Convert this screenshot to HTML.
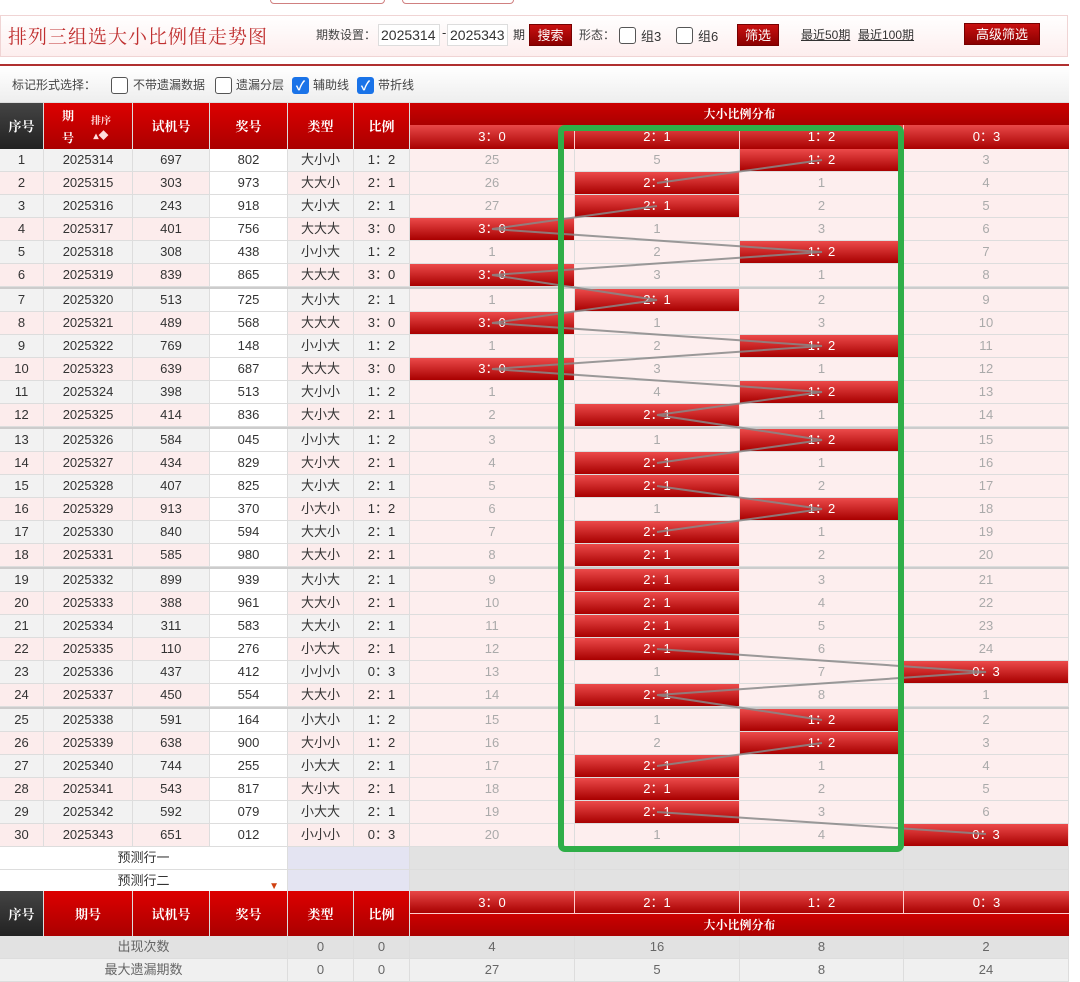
<!DOCTYPE html>
<html><head><meta charset="utf-8"><style>
*{box-sizing:border-box;margin:0;padding:0}
body{width:1080px;height:970px;overflow:hidden;background:#fff;font-family:"Liberation Sans","Noto Sans CJK SC",sans-serif;font-size:13px;color:#333;position:relative}
.a{position:absolute}
.btn{position:absolute;background:linear-gradient(#c81010,#8a0000);color:#fff;font-size:13px;text-align:center;line-height:22px;height:22px;border:1px solid #700}
.cb{position:absolute;width:17px;height:17px;border:1.5px solid #555;border-radius:3px;background:#fff}
.cbc{position:absolute;width:17px;height:17px;border-radius:3px;background:#1a73e8;color:#fff;font-size:13px;line-height:17px;text-align:center;font-weight:bold}
.inp{position:absolute;height:22px;background:#fff;border:1px solid #ddd;font-size:14px;line-height:20px;padding-left:2px}
#tb{position:absolute;left:0;top:103px;width:1069px}
.r{display:flex;height:23px;border-bottom:1px solid #ddd}
.r.s{height:25px;border-top:2px solid #ccc}
.r>div{border-right:1px solid #ddd;text-align:center;line-height:22px;font-size:13px;height:100%}
.w1{width:44px}.w2{width:89px}.w3{width:77px}.w4{width:78px}.w5{width:66px}.w6{width:56px}.m{width:165px}.m4{width:164px}
.o>div{background:#f2f2f2}.e>div{background:#fcecec}
.r>div.wh{background:#fff}
.r>div.p{background:#fdeeee;color:#aaa}
.r>div.x{background:linear-gradient(#ec4a4a,#a80000);color:#fff;border-right:1px solid #fdd}
.h{color:#fff;font-weight:bold;font-family:"Noto Serif CJK SC",serif;text-align:center}
</style></head><body>
<div class="a" style="left:270px;top:-10px;width:115px;height:14px;border:1px solid #d08080;border-radius:4px"></div>
<div class="a" style="left:402px;top:-10px;width:112px;height:14px;border:1px solid #d08080;border-radius:4px"></div>
<div class="a" style="left:0;top:15px;width:1068px;height:42px;border:1px solid #f0d4d4;background:linear-gradient(#fff,#fdeeee)"></div>
<div class="a" style="left:8px;top:22px;font-size:19px;color:#c03030;font-family:'Noto Serif CJK SC',serif;letter-spacing:1px">排列三组选大小比例值走势图</div>
<div class="a" style="left:316px;top:26px;font-size:12px;color:#444">期数设置：</div>
<div class="inp" style="left:378px;top:24px;width:62px">2025314</div>
<div class="a" style="left:442px;top:25px">-</div>
<div class="inp" style="left:447px;top:24px;width:61px">2025343</div>
<div class="a" style="left:513px;top:26px;font-size:12px">期</div>
<div class="btn" style="left:529px;top:24px;width:43px">搜索</div>
<div class="a" style="left:579px;top:26px;font-size:12px;color:#444">形态：</div>
<div class="cb" style="left:619px;top:27px"></div><div class="a" style="left:641px;top:26px">组3</div>
<div class="cb" style="left:676px;top:27px"></div><div class="a" style="left:698px;top:26px">组6</div>
<div class="btn" style="left:737px;top:24px;width:42px">筛选</div>
<div class="a" style="left:801px;top:26px;text-decoration:underline;font-size:12px">最近50期</div>
<div class="a" style="left:858px;top:26px;text-decoration:underline;font-size:12px">最近100期</div>
<div class="btn" style="left:964px;top:23px;width:76px">高级筛选</div>
<div class="a" style="left:0;top:64px;width:1069px;height:2px;background:#b03030"></div>
<div class="a" style="left:0;top:67px;width:1069px;height:36px;background:linear-gradient(#fff,#eee);border-bottom:1px solid #ddd"></div>
<div class="a" style="left:12px;top:76px;font-size:12px;color:#444">标记形式选择：</div>
<div class="cb" style="left:111px;top:77px"></div><div class="a" style="left:133px;top:76px;font-size:12px;color:#444">不带遗漏数据</div>
<div class="cb" style="left:215px;top:77px"></div><div class="a" style="left:236px;top:76px;font-size:12px;color:#444">遗漏分层</div>
<div class="cbc" style="left:292px;top:77px">✓</div><div class="a" style="left:313px;top:76px;font-size:12px;color:#444">辅助线</div>
<div class="cbc" style="left:357px;top:77px">✓</div><div class="a" style="left:378px;top:76px;font-size:12px;color:#444">带折线</div>

<div class="a h" style="left:0;top:103px;width:44px;height:46px;line-height:46px;background:linear-gradient(#444,#222);border-right:1px solid #ddd">序号</div>
<div class="a h" style="left:44px;top:103px;width:89px;height:46px;background:linear-gradient(#d00,#a00);border-right:1px solid #ddd;font-size:12px"><div style="position:absolute;left:18px;top:4px">期</div><div style="position:absolute;left:18px;top:26px">号</div><div style="position:absolute;left:47px;top:9px;font-size:10px;color:#fdd">排序<br>▴◆</div></div>
<div class="a h" style="left:133px;top:103px;width:77px;height:46px;line-height:46px;background:linear-gradient(#d00,#a00);border-right:1px solid #ddd">试机号</div>
<div class="a h" style="left:210px;top:103px;width:78px;height:46px;line-height:46px;background:linear-gradient(#d00,#a00);border-right:1px solid #ddd">奖号</div>
<div class="a h" style="left:288px;top:103px;width:66px;height:46px;line-height:46px;background:linear-gradient(#d00,#a00);border-right:1px solid #ddd">类型</div>
<div class="a h" style="left:354px;top:103px;width:56px;height:46px;line-height:46px;background:linear-gradient(#d00,#a00);border-right:1px solid #ddd">比例</div>
<div class="a h" style="left:410px;top:103px;width:659px;height:22px;line-height:22px;background:linear-gradient(#c00,#a00);font-size:12px">大小比例分布</div>
<div class="a" style="left:410px;top:125px;width:659px;height:24px;display:flex;color:#fff;font-size:13px;line-height:24px;text-align:center">
<div style="width:165px;background:linear-gradient(#e84848,#a80000);border-right:1px solid #fcc">3：0</div><div style="width:165px;background:linear-gradient(#e84848,#a80000);border-right:1px solid #fcc">2：1</div><div style="width:164px;background:linear-gradient(#e84848,#a80000);border-right:1px solid #fcc">1：2</div><div style="width:165px;background:linear-gradient(#e84848,#a80000)">0：3</div></div>

<div id="tb" style="top:149px">
<div class="r o"><div class="w1">1</div><div class="w2">2025314</div><div class="w3">697</div><div class="w4 wh">802</div><div class="w5">大小小</div><div class="w6">1：2</div><div class="m p">25</div><div class="m p">5</div><div class="m4 x">1：2</div><div class="m p">3</div></div>
<div class="r e"><div class="w1">2</div><div class="w2">2025315</div><div class="w3">303</div><div class="w4 wh">973</div><div class="w5">大大小</div><div class="w6">2：1</div><div class="m p">26</div><div class="m x">2：1</div><div class="m4 p">1</div><div class="m p">4</div></div>
<div class="r o"><div class="w1">3</div><div class="w2">2025316</div><div class="w3">243</div><div class="w4 wh">918</div><div class="w5">大小大</div><div class="w6">2：1</div><div class="m p">27</div><div class="m x">2：1</div><div class="m4 p">2</div><div class="m p">5</div></div>
<div class="r e"><div class="w1">4</div><div class="w2">2025317</div><div class="w3">401</div><div class="w4 wh">756</div><div class="w5">大大大</div><div class="w6">3：0</div><div class="m x">3：0</div><div class="m p">1</div><div class="m4 p">3</div><div class="m p">6</div></div>
<div class="r o"><div class="w1">5</div><div class="w2">2025318</div><div class="w3">308</div><div class="w4 wh">438</div><div class="w5">小小大</div><div class="w6">1：2</div><div class="m p">1</div><div class="m p">2</div><div class="m4 x">1：2</div><div class="m p">7</div></div>
<div class="r e"><div class="w1">6</div><div class="w2">2025319</div><div class="w3">839</div><div class="w4 wh">865</div><div class="w5">大大大</div><div class="w6">3：0</div><div class="m x">3：0</div><div class="m p">3</div><div class="m4 p">1</div><div class="m p">8</div></div>
<div class="r o s"><div class="w1">7</div><div class="w2">2025320</div><div class="w3">513</div><div class="w4 wh">725</div><div class="w5">大小大</div><div class="w6">2：1</div><div class="m p">1</div><div class="m x">2：1</div><div class="m4 p">2</div><div class="m p">9</div></div>
<div class="r e"><div class="w1">8</div><div class="w2">2025321</div><div class="w3">489</div><div class="w4 wh">568</div><div class="w5">大大大</div><div class="w6">3：0</div><div class="m x">3：0</div><div class="m p">1</div><div class="m4 p">3</div><div class="m p">10</div></div>
<div class="r o"><div class="w1">9</div><div class="w2">2025322</div><div class="w3">769</div><div class="w4 wh">148</div><div class="w5">小小大</div><div class="w6">1：2</div><div class="m p">1</div><div class="m p">2</div><div class="m4 x">1：2</div><div class="m p">11</div></div>
<div class="r e"><div class="w1">10</div><div class="w2">2025323</div><div class="w3">639</div><div class="w4 wh">687</div><div class="w5">大大大</div><div class="w6">3：0</div><div class="m x">3：0</div><div class="m p">3</div><div class="m4 p">1</div><div class="m p">12</div></div>
<div class="r o"><div class="w1">11</div><div class="w2">2025324</div><div class="w3">398</div><div class="w4 wh">513</div><div class="w5">大小小</div><div class="w6">1：2</div><div class="m p">1</div><div class="m p">4</div><div class="m4 x">1：2</div><div class="m p">13</div></div>
<div class="r e"><div class="w1">12</div><div class="w2">2025325</div><div class="w3">414</div><div class="w4 wh">836</div><div class="w5">大小大</div><div class="w6">2：1</div><div class="m p">2</div><div class="m x">2：1</div><div class="m4 p">1</div><div class="m p">14</div></div>
<div class="r o s"><div class="w1">13</div><div class="w2">2025326</div><div class="w3">584</div><div class="w4 wh">045</div><div class="w5">小小大</div><div class="w6">1：2</div><div class="m p">3</div><div class="m p">1</div><div class="m4 x">1：2</div><div class="m p">15</div></div>
<div class="r e"><div class="w1">14</div><div class="w2">2025327</div><div class="w3">434</div><div class="w4 wh">829</div><div class="w5">大小大</div><div class="w6">2：1</div><div class="m p">4</div><div class="m x">2：1</div><div class="m4 p">1</div><div class="m p">16</div></div>
<div class="r o"><div class="w1">15</div><div class="w2">2025328</div><div class="w3">407</div><div class="w4 wh">825</div><div class="w5">大小大</div><div class="w6">2：1</div><div class="m p">5</div><div class="m x">2：1</div><div class="m4 p">2</div><div class="m p">17</div></div>
<div class="r e"><div class="w1">16</div><div class="w2">2025329</div><div class="w3">913</div><div class="w4 wh">370</div><div class="w5">小大小</div><div class="w6">1：2</div><div class="m p">6</div><div class="m p">1</div><div class="m4 x">1：2</div><div class="m p">18</div></div>
<div class="r o"><div class="w1">17</div><div class="w2">2025330</div><div class="w3">840</div><div class="w4 wh">594</div><div class="w5">大大小</div><div class="w6">2：1</div><div class="m p">7</div><div class="m x">2：1</div><div class="m4 p">1</div><div class="m p">19</div></div>
<div class="r e"><div class="w1">18</div><div class="w2">2025331</div><div class="w3">585</div><div class="w4 wh">980</div><div class="w5">大大小</div><div class="w6">2：1</div><div class="m p">8</div><div class="m x">2：1</div><div class="m4 p">2</div><div class="m p">20</div></div>
<div class="r o s"><div class="w1">19</div><div class="w2">2025332</div><div class="w3">899</div><div class="w4 wh">939</div><div class="w5">大小大</div><div class="w6">2：1</div><div class="m p">9</div><div class="m x">2：1</div><div class="m4 p">3</div><div class="m p">21</div></div>
<div class="r e"><div class="w1">20</div><div class="w2">2025333</div><div class="w3">388</div><div class="w4 wh">961</div><div class="w5">大大小</div><div class="w6">2：1</div><div class="m p">10</div><div class="m x">2：1</div><div class="m4 p">4</div><div class="m p">22</div></div>
<div class="r o"><div class="w1">21</div><div class="w2">2025334</div><div class="w3">311</div><div class="w4 wh">583</div><div class="w5">大大小</div><div class="w6">2：1</div><div class="m p">11</div><div class="m x">2：1</div><div class="m4 p">5</div><div class="m p">23</div></div>
<div class="r e"><div class="w1">22</div><div class="w2">2025335</div><div class="w3">110</div><div class="w4 wh">276</div><div class="w5">小大大</div><div class="w6">2：1</div><div class="m p">12</div><div class="m x">2：1</div><div class="m4 p">6</div><div class="m p">24</div></div>
<div class="r o"><div class="w1">23</div><div class="w2">2025336</div><div class="w3">437</div><div class="w4 wh">412</div><div class="w5">小小小</div><div class="w6">0：3</div><div class="m p">13</div><div class="m p">1</div><div class="m4 p">7</div><div class="m x">0：3</div></div>
<div class="r e"><div class="w1">24</div><div class="w2">2025337</div><div class="w3">450</div><div class="w4 wh">554</div><div class="w5">大大小</div><div class="w6">2：1</div><div class="m p">14</div><div class="m x">2：1</div><div class="m4 p">8</div><div class="m p">1</div></div>
<div class="r o s"><div class="w1">25</div><div class="w2">2025338</div><div class="w3">591</div><div class="w4 wh">164</div><div class="w5">小大小</div><div class="w6">1：2</div><div class="m p">15</div><div class="m p">1</div><div class="m4 x">1：2</div><div class="m p">2</div></div>
<div class="r e"><div class="w1">26</div><div class="w2">2025339</div><div class="w3">638</div><div class="w4 wh">900</div><div class="w5">大小小</div><div class="w6">1：2</div><div class="m p">16</div><div class="m p">2</div><div class="m4 x">1：2</div><div class="m p">3</div></div>
<div class="r o"><div class="w1">27</div><div class="w2">2025340</div><div class="w3">744</div><div class="w4 wh">255</div><div class="w5">小大大</div><div class="w6">2：1</div><div class="m p">17</div><div class="m x">2：1</div><div class="m4 p">1</div><div class="m p">4</div></div>
<div class="r e"><div class="w1">28</div><div class="w2">2025341</div><div class="w3">543</div><div class="w4 wh">817</div><div class="w5">大小大</div><div class="w6">2：1</div><div class="m p">18</div><div class="m x">2：1</div><div class="m4 p">2</div><div class="m p">5</div></div>
<div class="r o"><div class="w1">29</div><div class="w2">2025342</div><div class="w3">592</div><div class="w4 wh">079</div><div class="w5">小大大</div><div class="w6">2：1</div><div class="m p">19</div><div class="m x">2：1</div><div class="m4 p">3</div><div class="m p">6</div></div>
<div class="r e"><div class="w1">30</div><div class="w2">2025343</div><div class="w3">651</div><div class="w4 wh">012</div><div class="w5">小小小</div><div class="w6">0：3</div><div class="m p">20</div><div class="m p">1</div><div class="m4 p">4</div><div class="m x">0：3</div></div>
<div class="r"><div style="width:288px;background:#fff">预测行一</div><div style="width:122px;background:#e4e4f2"></div><div class="m" style="background:#e2e2e2"></div><div class="m" style="background:#e2e2e2"></div><div class="m4" style="background:#e2e2e2"></div><div class="m" style="background:#e2e2e2"></div></div>
<div class="r"><div style="width:288px;background:#fff;position:relative">预测行二<span style="position:absolute;right:8px;top:6px;color:#d04010;font-size:10px">▼</span></div><div style="width:122px;background:#e4e4f2"></div><div class="m" style="background:#e2e2e2"></div><div class="m" style="background:#e2e2e2"></div><div class="m4" style="background:#e2e2e2"></div><div class="m" style="background:#e2e2e2"></div></div>
</div>

<div class="a h" style="left:0;top:891px;width:44px;height:45px;line-height:45px;background:linear-gradient(#444,#222);border-right:1px solid #ddd">序号</div>
<div class="a h" style="left:44px;top:891px;width:89px;height:45px;line-height:45px;background:linear-gradient(#d00,#a00);border-right:1px solid #ddd">期号</div>
<div class="a h" style="left:133px;top:891px;width:77px;height:45px;line-height:45px;background:linear-gradient(#d00,#a00);border-right:1px solid #ddd">试机号</div>
<div class="a h" style="left:210px;top:891px;width:78px;height:45px;line-height:45px;background:linear-gradient(#d00,#a00);border-right:1px solid #ddd">奖号</div>
<div class="a h" style="left:288px;top:891px;width:66px;height:45px;line-height:45px;background:linear-gradient(#d00,#a00);border-right:1px solid #ddd">类型</div>
<div class="a h" style="left:354px;top:891px;width:56px;height:45px;line-height:45px;background:linear-gradient(#d00,#a00);border-right:1px solid #ddd">比例</div>
<div class="a" style="left:410px;top:891px;width:659px;height:23px;display:flex;color:#fff;font-size:13px;line-height:23px;text-align:center;border-bottom:1px solid #fcc">
<div style="width:165px;background:linear-gradient(#e84848,#a80000);border-right:1px solid #fcc">3：0</div><div style="width:165px;background:linear-gradient(#e84848,#a80000);border-right:1px solid #fcc">2：1</div><div style="width:164px;background:linear-gradient(#e84848,#a80000);border-right:1px solid #fcc">1：2</div><div style="width:165px;background:linear-gradient(#e84848,#a80000)">0：3</div></div>
<div class="a h" style="left:410px;top:914px;width:659px;height:22px;line-height:22px;background:linear-gradient(#c00,#a00);font-size:12px">大小比例分布</div>
<div class="a" style="left:0;top:936px;width:1069px">
<div class="r" style="background:#e2e2e2;color:#666"><div style="width:288px">出现次数</div><div class="w5">0</div><div class="w6">0</div><div class="m">4</div><div class="m">16</div><div class="m4">8</div><div class="m">2</div></div>
<div class="r" style="background:#f0f0f0;color:#666"><div style="width:288px">最大遗漏期数</div><div class="w5">0</div><div class="w6">0</div><div class="m">27</div><div class="m">5</div><div class="m4">8</div><div class="m">24</div></div>
</div>

<svg class="a" style="left:0;top:0" width="1080" height="970">
<path fill="none" stroke="#888" stroke-opacity="0.85" stroke-width="2" d="M822,160 L657,183 M657,206 L492,229 L822,252 L492,275 L657,300 L492,323 L822,346 L492,369 L822,392 L657,415 L822,440 L657,463 M657,486 L822,509 L657,532 M657,649 L986,672 L657,695 L822,720 M822,743 L657,766 M657,812 L986,834"/>
<rect x="561" y="128" width="340" height="721" rx="4" fill="none" stroke="#2fae48" stroke-width="6"/>
</svg>
</body></html>
